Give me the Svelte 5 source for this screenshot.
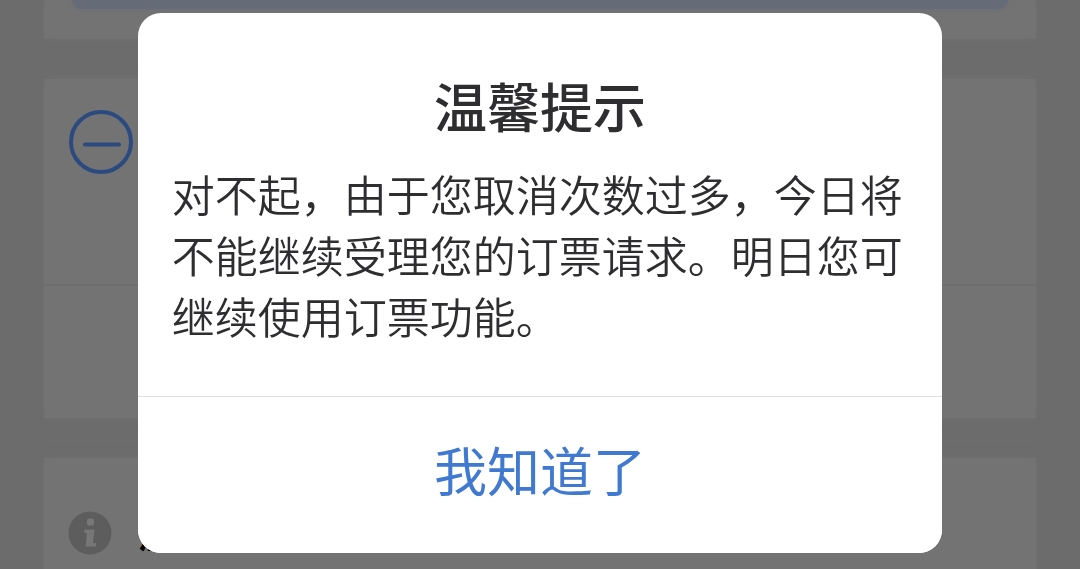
<script>
  let open = $state(true);

  const title = '温馨提示';
  const message = '对不起，由于您取消次数过多，今日将不能继续受理您的订票请求。明日您可继续使用订票功能。';

  function close() {
    open = false;
  }
</script>

<main class="page">
  <section class="card card-top">
    <button type="button" class="submit" aria-label="提交"></button>
  </section>

  <section class="card card-main">
    <div class="row">
      <button type="button" class="minus" aria-label="移除">
        <svg viewBox="0 0 66 66" width="66" height="66" fill="none" stroke="#2b4a80" stroke-width="4" stroke-linecap="round" aria-hidden="true">
          <circle cx="33" cy="33" r="30" />
          <path d="M17 35.500h34" />
        </svg>
      </button>
    </div>
    <div class="row row-last"></div>
  </section>

  <section class="card card-tips">
    <svg viewBox="0 0 44 44" width="44" height="44" aria-hidden="true">
      <circle cx="22" cy="22" r="21.5" fill="#5d5d5d" />
      <rect x="19" y="7.500" width="7" height="7" rx="2" fill="#777" />
      <path d="M17 18.500h9.500l-1.500 13.500h3v3.500H17.500l1.500-13.500h-3z" fill="#777" />
    </svg>
    <h2>{title}</h2>
  </section>
</main>

{#if open}
  <div class="backdrop">
    <div class="dialog" role="alertdialog" aria-modal="true" aria-labelledby="dialog-title" aria-describedby="dialog-text">
      <div class="dialog-body">
        <h1 id="dialog-title">{title}</h1>
        <p id="dialog-text">{message}</p>
      </div>
      <button type="button" class="confirm" onclick={close}>我知道了</button>
    </div>
  </div>
{/if}

<style>
  :global(body) {
    margin: 0;
    background: #6c6c6c;
    overflow: hidden;
  }
  .page,
  .backdrop {
    font-family: "Noto Sans CJK SC", sans-serif;
  }
  .page {
    display: flex;
    flex-direction: column;
    gap: 40px;
    height: 100vh;
    padding: 0 44px;
    overflow: hidden;
  }
  .card {
    flex: none;
    background: #737373;
    box-shadow: 0 0 8px #707070;
  }
  .card-top {
    padding: 0 28px 30px;
  }
  .submit {
    display: block;
    width: 100%;
    height: 9px;
    padding: 0;
    border: 0;
    border-radius: 0 0 24px 24px;
    background: #666c77;
    box-shadow: 0 0 6px #6b6e74;
  }
  .row {
    padding: 30px 24px 109px;
    border-bottom: 2px solid #6e6e6e;
  }
  .row-last {
    padding: 66px 0;
    border-bottom: 0;
  }
  .minus {
    display: block;
    padding: 0;
    border: 0;
    background: none;
    cursor: pointer;
  }
  .minus svg {
    display: block;
  }
  .card-tips {
    display: flex;
    align-items: center;
    gap: 26px;
    padding: 53px 24px;
  }
  .card-tips h2 {
    margin: 0;
    font-size: 36px;
    line-height: 44px;
    font-weight: 700;
    color: #000;
  }

  .backdrop {
    position: fixed;
    inset: 0;
    display: flex;
    align-items: center;
    justify-content: center;
  }
  .dialog {
    width: 74.5%;
    margin-bottom: 3px;
    border-radius: 23px;
    background: #fff;
    overflow: hidden;
  }
  .dialog-body {
    padding: 58px 34px 50px;
    color: #2e2e30;
  }
  h1 {
    margin: 0 0 24px;
    font-size: 53px;
    line-height: 68px;
    font-weight: 500;
    text-align: center;
  }
  p {
    margin: 0;
    font-size: 43px;
    line-height: 61px;
    font-weight: 350;
  }
  .confirm {
    display: block;
    width: 100%;
    padding: 38px 0 50px;
    border: 0;
    border-top: 1px solid #dedede;
    background: #fff;
    font-family: inherit;
    font-size: 53px;
    line-height: 68px;
    font-weight: 400;
    color: #3f79d0;
    cursor: pointer;
  }
</style>
